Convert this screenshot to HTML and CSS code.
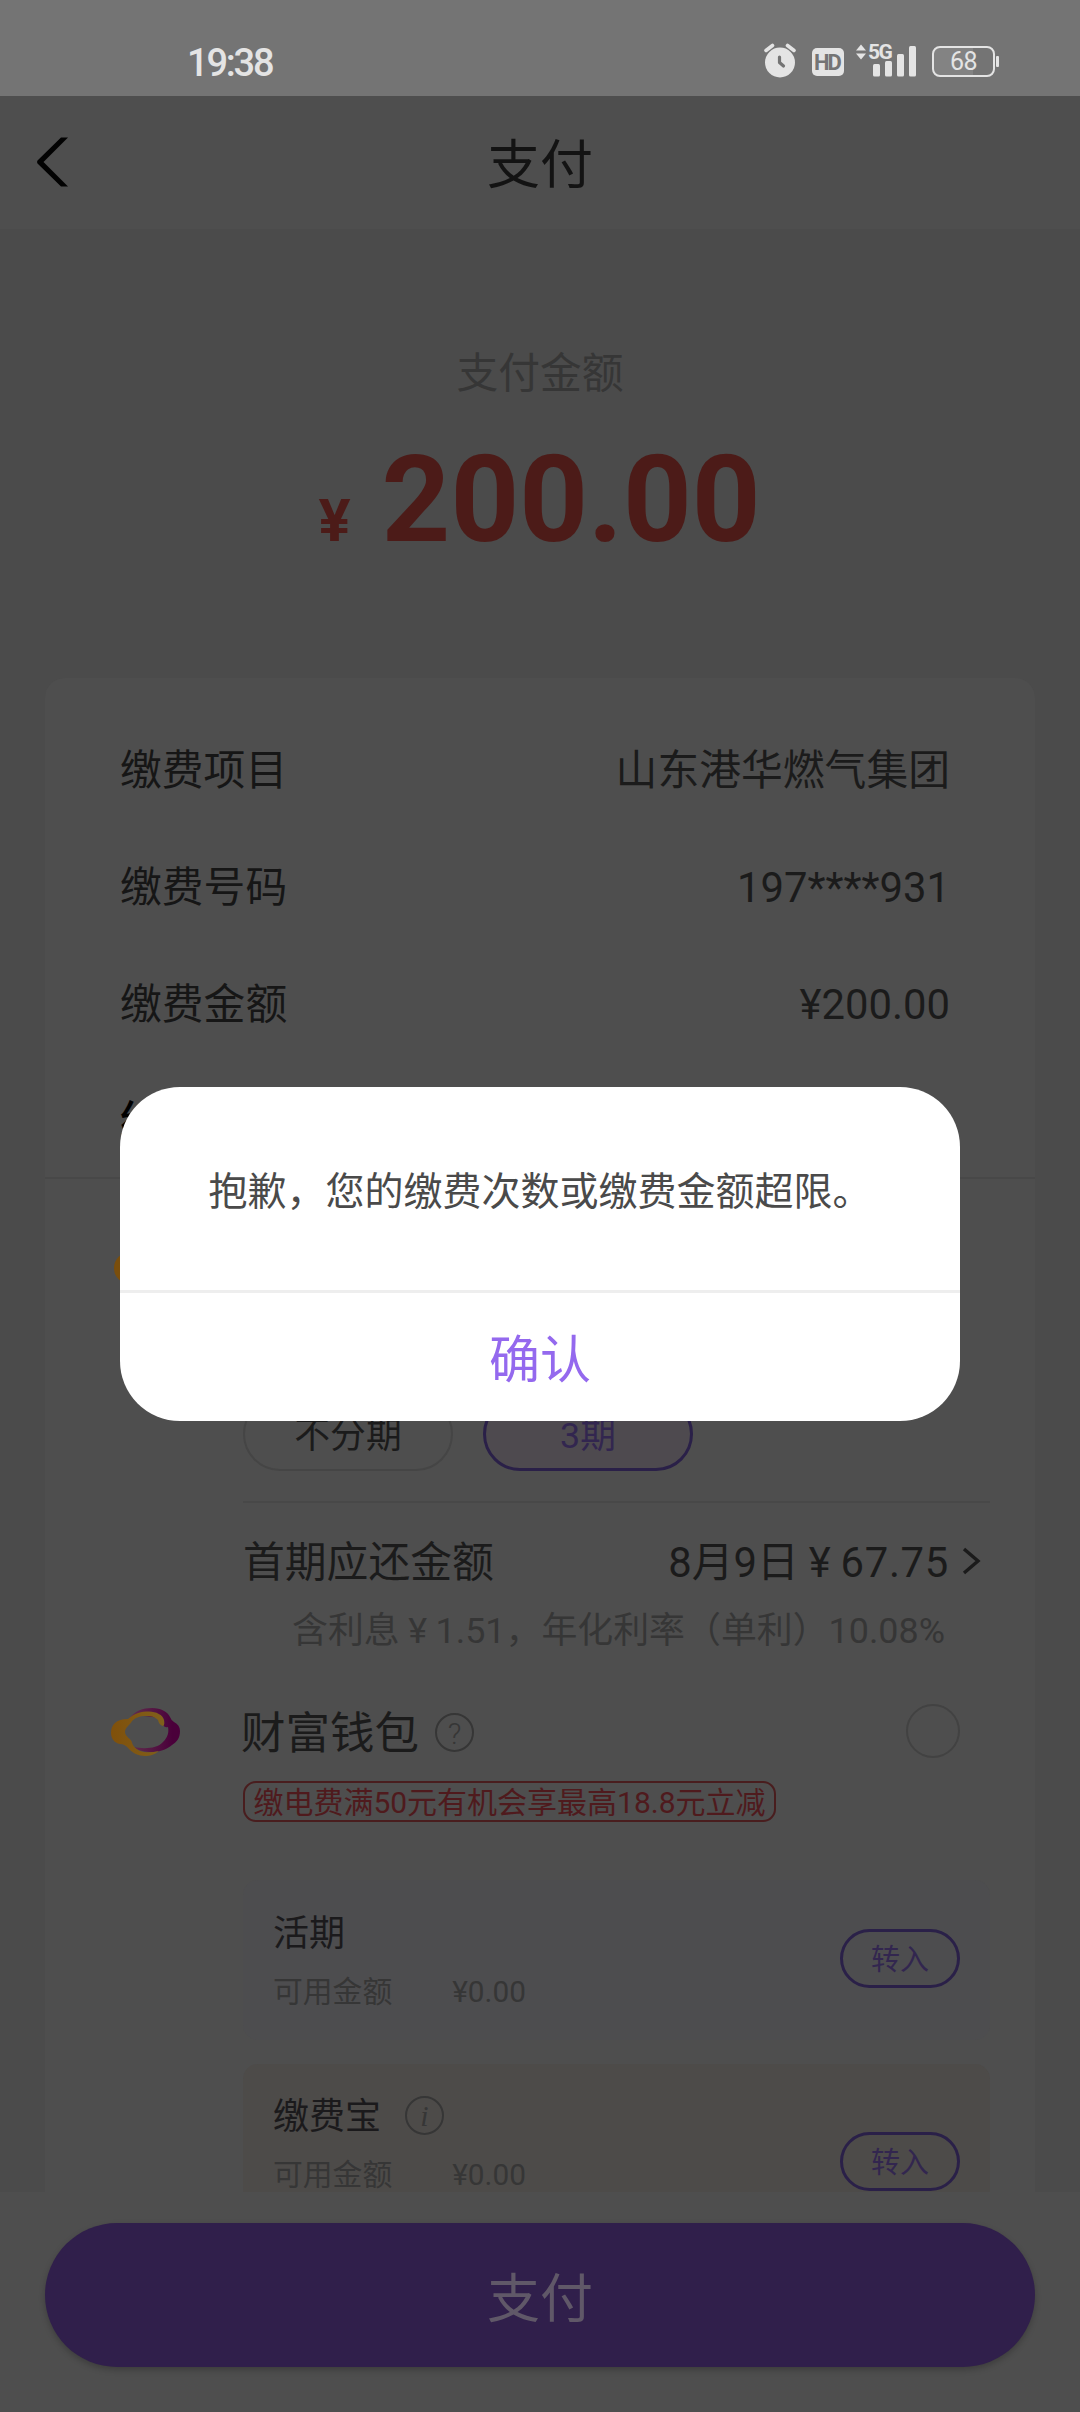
FILE: index.html
```html
<!DOCTYPE html>
<html lang="zh-CN">
<head>
<meta charset="utf-8">
<title>支付</title>
<link rel="stylesheet" href="styles.css">
</head>
<body>
<div class="screen">
  <div class="status">
    <span class="clock">19:38</span>
    <div class="status-icons">
      <svg class="alarm" width="32" height="36" viewBox="0 0 32 36">
        <circle cx="16" cy="20.5" r="15" fill="#e4e4e4"/>
        <path d="M2 8.5L8.5 3.5M30 8.5L23.5 3.5" stroke="#e4e4e4" stroke-width="3.6" stroke-linecap="round"/>
        <path d="M15.5 15V20.5L19.5 24" fill="none" stroke="#747474" stroke-width="3.2" stroke-linecap="round" stroke-linejoin="round"/>
      </svg>
      <span class="hd">HD</span>
      <div class="signal">
        <svg width="60" height="34" viewBox="0 0 60 34">
          <path d="M0 6.500L5 0.500L10 6.500ZM0 9.500L5 15.500L10 9.500Z" fill="#e4e4e4"/>
          <g fill="#e4e4e4">
            <rect x="17" y="20" width="7" height="12.500" rx="1.500"/>
            <rect x="29" y="17" width="7" height="15.500" rx="1.500"/>
            <rect x="41" y="10" width="7" height="22.500" rx="1.500"/>
            <rect x="53" y="2" width="7" height="30.500" rx="1.500"/>
          </g>
        </svg>
        <span class="net">5G</span>
      </div>
      <div class="battery"><span class="level">68</span></div>
      <span class="battery-cap"></span>
    </div>
  </div>

  <header class="header">
    <svg class="back" width="34" height="50" viewBox="0 0 34 50">
      <path d="M25 0.500H32L7.500 25L32 49.500H25L1.500 26.500Q0.500 25 1.500 23.500Z" fill="#020202"/>
    </svg>
    <h1 class="title">支付</h1>
  </header>

  <main class="content">
    <section class="amount">
      <p class="amount-label">支付金额</p>
      <p class="amount-value"><span class="currency">¥</span><span>200.00</span></p>
    </section>

    <section class="card">
      <div class="details">
        <div class="row"><span>缴费项目</span><span class="value">山东港华燃气集团</span></div>
        <div class="row"><span>缴费号码</span><span class="value">197****931</span></div>
        <div class="row"><span>缴费金额</span><span class="value">¥200.00</span></div>
        <div class="row heading"><span>红包</span></div>
      </div>

      <div class="credit">
        <div class="credit-head"><span class="credit-logo"></span></div>
        <div class="terms">
          <span class="term">不分期</span>
          <span class="term selected">3期</span>
        </div>
        <div class="repay">
          <span>首期应还金额</span>
          <span class="repay-value">8月9日<span class="yen">¥</span><span class="sum">67.75</span></span>
          <svg class="more" width="20" height="28" viewBox="0 0 20 28"><path d="M2 2L16 14L2 26" fill="none" stroke="#1b1b1b" stroke-width="3.400"/></svg>
        </div>
        <p class="interest">含利息<span class="yen">¥</span>1.51，年化利率（单利）10.08%</p>
      </div>

      <div class="wallet">
        <svg class="wallet-logo" width="70" height="50" viewBox="0 0 70 50">
          <defs>
            <linearGradient id="gold" x1="0" x2="1"><stop offset="0" stop-color="#80500a"/><stop offset="1" stop-color="#80601c"/></linearGradient>
            <linearGradient id="plum" x1="0" x2="1"><stop offset="0" stop-color="#62304f"/><stop offset="0.850" stop-color="#4a003a"/></linearGradient>
          </defs>
          <path fill="url(#plum)" d="M18 12C23 4 32 1 41 1C50 1 57 5 59 10Q60 13 63 15C67 17 69 20 69 24C69 31 66 35 61 38C56 42 50 45 41 45C34 45 27 44 23 40C32 42 46 42 52 35C57 30 58 25 57 20Q53 21 52 17L50 11L24 8Z"/>
          <path fill="url(#gold)" d="M0 26C0 18 5 12 17 12C24 6 30 4.500 38 4.500C45 4.500 52 8 53 13Q54 18 52 19Q48 18 47 13C43 9 39 9 35 9C28 9 24 11 21 14C19 18 14 20 14 25C14 30 21 32 21 36C23 41 27 44 33 45Q40 46 48 44C43 48 39 49 34 49C27 49 22 46 18 42Q14 37 9 37C3 36 0 31 0 26Z"/>
        </svg>
        <div class="wallet-body">
          <div class="wallet-head">
            <span class="wallet-name">财富钱包</span>
            <span class="badge question">?</span>
            <span class="radio"></span>
          </div>
          <span class="promo">缴电费满50元有机会享最高18.8元立减</span>
          <div class="account current">
            <div>
              <p class="account-name">活期</p>
              <p class="balance"><span>可用金额</span><span>¥0.00</span></p>
            </div>
            <span class="transfer">转入</span>
          </div>
          <div class="account bills">
            <div>
              <p class="account-name">缴费宝<span class="badge info">i</span></p>
              <p class="balance"><span>可用金额</span><span>¥0.00</span></p>
            </div>
            <span class="transfer">转入</span>
          </div>
        </div>
      </div>
    </section>
  </main>

  <footer class="footer"><button class="pay">支付</button></footer>

  <div class="dialog" role="alertdialog">
    <p class="message">抱歉，您的缴费次数或缴费金额超限。</p>
    <button class="confirm">确认</button>
  </div>
</div>
</body>
</html>
```
FILE: styles.css
```css
* { box-sizing: border-box; }
body, p, h1 { margin: 0; }
body { background: #4b4b4b; font-family: Roboto, "Noto Sans CJK SC", sans-serif; }
button { border: 0; padding: 0; font-family: inherit; }

.screen { position: relative; display: flex; flex-direction: column; width: 1080px; height: 2412px; overflow: hidden; }

.status { display: flex; justify-content: space-between; height: 96px; padding: 0 81px 0 187px; background: #747474; color: #e4e4e4; }
.clock { padding-top: 43px; font: 500 38px/40px Roboto, sans-serif; letter-spacing: -2.2px; }
.status-icons { display: flex; align-items: flex-start; padding-top: 44px; }
.alarm { margin: -2px 16px 0 0; }
.hd { width: 32px; height: 28px; margin: 4px 12px 0 0; border-radius: 5px; background: #e4e4e4; color: #747474; font: 700 22px/29px Roboto, sans-serif; letter-spacing: -2px; text-indent: -2px; text-align: center; }
.signal { position: relative; width: 60px; height: 34px; margin-right: 16px; }
.net { position: absolute; left: 12px; top: -1px; font: 700 21px/18px Roboto, sans-serif; letter-spacing: -1.5px; }
.battery { width: 63px; height: 31px; margin-top: 2px; border: 2.500px solid #e4e4e4; border-radius: 8px; background: linear-gradient(90deg, #838383 66%, #747474 66%); text-align: center; }
.level { display: block; font: 400 25px/28px Roboto, sans-serif; letter-spacing: -.5px; }
.battery-cap { width: 3px; height: 11px; margin: 12px 0 0 1px; border-radius: 1px; background: #e4e4e4; }

.header { display: grid; grid-template-columns: 1fr auto 1fr; align-items: center; height: 133px; padding: 0 36px; background: #4e4e4e; }
.back { margin-top: -2px; }
.title { font-size: 53px; font-weight: 400; line-height: 60px; color: #131313; padding-top: 6px; }

.content { height: 1963px; overflow: hidden; padding: 0 45px; }
.amount { height: 449px; padding-top: 115px; text-align: center; }
.amount-label { font-size: 41.8px; line-height: 60px; color: #363636; }
.amount-value { display: flex; justify-content: center; align-items: baseline; gap: 31px; margin: 36px 1px 0 0; font-size: 120px; line-height: 120px; font-weight: 700; color: #4c1b18; }
.currency { font-size: 60px; }

.card { height: 1600px; border-radius: 20px; background: #4e4e4e; color: #161616; }
.details { height: 501px; padding: 34px 85px 0 75px; border-bottom: 2px solid #484848; }
.row { display: flex; justify-content: space-between; font-size: 41.8px; line-height: 117px; }
.value { color: #1b1b1b; }
.heading { color: #000; font-weight: 500; }

.credit { padding: 0 45px 0 198px; }
.credit-head { height: 218px; padding-top: 73px; }
.credit-logo { display: block; width: 50px; height: 32px; margin-left: -129px; border-radius: 16px; background: #7a4e0c; }
.terms { display: flex; gap: 30px; height: 106px; border-bottom: 2px solid #484848; }
.term { width: 210px; height: 74px; border: 2px solid #454545; border-radius: 37px; text-align: center; font-size: 35.8px; line-height: 75px; color: #1b1b1b; }
.term.selected { border: 3px solid #2a2048; background: #4e4a4f; color: #32264f; line-height: 73px; }
.repay { display: flex; align-items: center; margin-top: 30px; height: 60px; font-size: 41.8px; line-height: 60px; color: #1b1b1b; }
.repay-value { margin-left: auto; }
.sum { letter-spacing: .7px; }
.yen { display: inline-block; width: 1em; text-align: center; }
.more { margin: -4px 8px 0 13px; }
.interest { margin-top: 8px; padding-right: 45px; text-align: right; font-size: 35.9px; line-height: 60px; color: #363636; white-space: nowrap; }

.wallet { display: flex; margin-top: 43px; padding: 0 45px 0 66px; }
.wallet-logo { margin: 3px 62px 0 0; flex: none; }
.wallet-body { flex: 1; }
.wallet-head { display: flex; align-items: center; height: 60px; }
.wallet-name { margin-left: -2px; font-size: 44.5px; line-height: 60px; color: #1b1b1b; }
.badge { width: 39px; height: 39px; border: 2px solid #363636; border-radius: 50%; text-align: center; color: #363636; }
.question { margin: -3px 0 0 16px; font: 300 30px/37px Roboto, sans-serif; }
.info { margin: -3px 0 0 24px; font: italic 400 30px/36px "Liberation Serif", serif; }
.radio { width: 54px; height: 54px; margin: -6px 30px 0 auto; border: 2.500px solid #424242; border-radius: 50%; }
.promo { display: block; width: 533px; height: 41px; margin-top: 17px; border: 2px solid #491d1e; border-radius: 13px; text-align: center; font-size: 30px; line-height: 40px; color: #4f1a1d; white-space: nowrap; }
.account { display: flex; justify-content: space-between; height: 160px; padding: 34px 30px 0 30px; border-radius: 15px; }
.current { margin-top: 58px; background: #4d4d4f; }
.bills { margin-top: 24px; padding-top: 33px; background: #4d4b49; }
.account-name { display: flex; align-items: center; height: 40px; font-size: 36px; line-height: 40px; color: #1b1a1c; }
.balance { display: flex; gap: 60px; margin-top: 18px; font-size: 29.8px; line-height: 40px; color: #363636; }
.transfer { width: 120px; height: 59px; margin-top: 15px; border: 3px solid #2a2048; border-radius: 30px; text-align: center; font-size: 29px; line-height: 57px; color: #32264f; }
.bills .transfer { margin-top: 35px; }

.footer { height: 220px; padding: 31px 45px 0; background: #4e4e4e; }
.pay { display: block; width: 990px; height: 144px; padding-bottom: 1px; border-radius: 72px; background: #301f4b; box-shadow: 0 3px 6px rgba(0, 0, 0, .22); color: #605868; font-size: 53px; }

.dialog { position: absolute; left: 120px; top: 1087px; width: 840px; height: 334px; border-radius: 60px; background: #fff; overflow: hidden; text-align: center; }
.message { height: 206px; border-bottom: 3px solid #eee; font-size: 39px; line-height: 211px; color: #4a4a4a; }
.confirm { width: 100%; height: 128px; padding-bottom: 2px; background: none; color: #9469ee; font-size: 51px; }
```
